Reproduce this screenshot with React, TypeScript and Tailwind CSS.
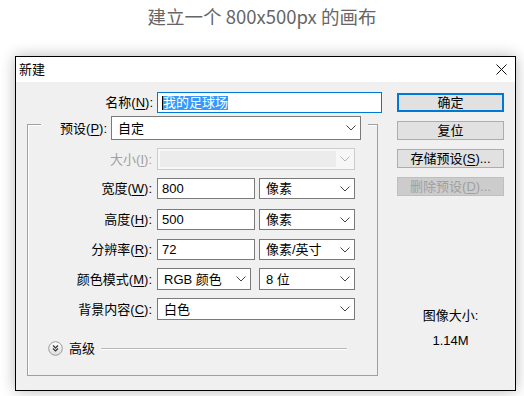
import React from 'react';

const Chevron = ({ color = '#444' }: { color?: string }) => (
  <svg width="10" height="6" viewBox="0 0 10 6">
    <path d="M0.5 0.5 L5 5 L9.5 0.5" fill="none" stroke={color} strokeWidth="1" />
  </svg>
);

const Select = ({ value, w, h = 'h-[22px]' }: { value: string; w: string; h?: string }) => (
  <div className={`${w} ${h} flex items-center justify-between border border-[#7a7a7a] bg-white pl-[6px] pr-[4px]`}>
    <span>{value}</span>
    <Chevron />
  </div>
);

const Label = ({ text, k, rest = '):', disabled = false }: { text: string; k: string; rest?: string; disabled?: boolean }) => (
  <div className={`w-[125px] text-right pr-[1px] ${disabled ? 'text-[#a0a0a0]' : 'text-black'}`}>
    {text}(<span className="underline underline-offset-2">{k}</span>{rest}
  </div>
);

const Button = ({ text, primary = false, disabled = false }: { text: React.ReactNode; primary?: boolean; disabled?: boolean }) => (
  <div
    className={`h-[19px] w-[107px] flex items-center justify-center ${
      primary
        ? 'border-2 border-[#0078d7] bg-[#e1e1e1]'
        : disabled
        ? 'border border-[#bfbfbf] bg-[#cccccc] text-[#a0a0a0]'
        : 'border border-[#adadad] bg-[#e1e1e1]'
    }`}
  >
    {text}
  </div>
);

export default function App() {
  return (
    <div className="w-[524px] h-[396px] bg-white overflow-hidden font-[family-name:'Liberation_Sans','Noto_Sans_CJK_SC',sans-serif] text-[13px] leading-none text-black">
      {/* Heading */}
      <div className="h-[56px] pt-[5px] text-center text-[18.5px] leading-[22px] text-[#666666] font-[family-name:'Noto_Sans_CJK_SC',sans-serif] font-normal">
        建立一个 800x500px 的画布
      </div>

      {/* Dialog */}
      <div className="ml-[15px] w-[501px] h-[335px] border border-black bg-[#f0f0f0] shadow-[0_0_14px_rgba(0,0,0,0.28)] flex flex-col">
        {/* Title bar */}
        <div className="h-[25px] bg-white flex items-center justify-between pl-[3px] pr-[8px]">
          <span className="text-[13px]">新建</span>
          <svg width="11" height="11" viewBox="0 0 11 11">
            <path d="M0.5 0.5 L10.5 10.5 M10.5 0.5 L0.5 10.5" stroke="#111" strokeWidth="1" />
          </svg>
        </div>

        {/* Body */}
        <div className="flex-1 flex">
          {/* Left column */}
          <div className="w-[366px] flex flex-col">
            <div className="mt-[10px] flex items-center">
              <div className="w-[138px] text-right pr-[1px]">
                名称(<span className="underline underline-offset-2">N</span>):
              </div>
              <div className="ml-[3px] w-[225px] h-[21px] border border-[#0078d7] bg-white flex items-center pl-[4px]">
                <span className="w-[1px] h-[14px] bg-black" />
                <span className="bg-[#3399ff] text-white leading-[14px]">我的足球场</span>
              </div>
            </div>

            {/* Group box */}
            <div className="mt-[11px] ml-[11px] w-[351px] h-[252px] border border-[#a0a0a0] shadow-[inset_1px_1px_0_#ffffff] flex flex-col">
              <div className="-mt-[9px] ml-[13px] w-[327px] bg-[#f0f0f0] flex items-center">
                <div className="w-[67px] text-right pr-[1px]">
                  预设(<span className="underline underline-offset-2">P</span>):
                </div>
                <div className="ml-[3px]">
                  <Select value="自定" w="w-[250px]" h="h-[24px]" />
                </div>
              </div>

              <div className="mt-[8px] flex items-center">
                <Label text="大小" k="I" disabled />
                <div className="ml-[4px] w-[198px] h-[22px] border border-[#cccccc] bg-[#f7f7f7] flex items-center justify-between p-[2px] pr-[4px]">
                  <div className="w-[176px] h-full bg-[#ececec]" />
                  <Chevron color="#b5b5b5" />
                </div>
              </div>

              <div className="mt-[8px] flex items-center">
                <Label text="宽度" k="W" />
                <div className="ml-[4px] w-[98px] h-[21px] border border-[#7a7a7a] bg-white flex items-center pl-[4px]">800</div>
                <div className="ml-[4px]">
                  <Select value="像素" w="w-[96px]" h="h-[21px]" />
                </div>
              </div>

              <div className="mt-[10px] flex items-center">
                <Label text="高度" k="H" />
                <div className="ml-[4px] w-[98px] h-[21px] border border-[#7a7a7a] bg-white flex items-center pl-[4px]">500</div>
                <div className="ml-[4px]">
                  <Select value="像素" w="w-[96px]" h="h-[21px]" />
                </div>
              </div>

              <div className="mt-[9px] flex items-center">
                <Label text="分辨率" k="R" />
                <div className="ml-[4px] w-[98px] h-[21px] border border-[#7a7a7a] bg-white flex items-center pl-[4px]">72</div>
                <div className="ml-[4px]">
                  <Select value="像素/英寸" w="w-[96px]" h="h-[21px]" />
                </div>
              </div>

              <div className="mt-[8px] flex items-center">
                <Label text="颜色模式" k="M" />
                <div className="ml-[4px]">
                  <Select value="RGB 颜色" w="w-[94px]" h="h-[22px]" />
                </div>
                <div className="ml-[8px]">
                  <Select value="8 位" w="w-[96px]" h="h-[22px]" />
                </div>
              </div>

              <div className="mt-[8px] flex items-center">
                <Label text="背景内容" k="C" />
                <div className="ml-[4px]">
                  <Select value="白色" w="w-[198px]" h="h-[22px]" />
                </div>
              </div>

              <div className="mt-[21px] ml-[20px] flex items-center">
                <svg width="15" height="15" viewBox="0 0 15 15">
                  <defs>
                    <linearGradient id="adv" x1="0" y1="0" x2="0" y2="1">
                      <stop offset="0" stopColor="#ffffff" />
                      <stop offset="1" stopColor="#dcdcdc" />
                    </linearGradient>
                  </defs>
                  <circle cx="7.5" cy="7.5" r="6.8" fill="url(#adv)" stroke="#9a9a9a" strokeWidth="1" />
                  <path d="M5 4.5 L7.5 7 L10 4.5 M5 7.5 L7.5 10 L10 7.5" fill="none" stroke="#333" strokeWidth="1.2" />
                </svg>
                <span className="ml-[6px]">高级</span>
                <div className="ml-[6px] w-[246px] h-[2px] border-t border-[#b8b8b8] border-b border-b-white" />
              </div>
            </div>
          </div>

          {/* Right column */}
          <div className="ml-[15px] w-[107px] flex flex-col">
            <div className="mt-[11px] flex flex-col gap-[9px]">
              <Button text="确定" primary />
              <Button text="复位" />
              <Button
                text={
                  <span>
                    存储预设(<span className="underline underline-offset-2">S</span>)...
                  </span>
                }
              />
              <Button
                text={
                  <span>
                    删除预设(<span className="underline underline-offset-2">D</span>)...
                  </span>
                }
                disabled
              />
            </div>
            <div className="mt-[113px] flex flex-col items-center">
              <span>图像大小:</span>
              <span className="mt-[12px]">1.14M</span>
            </div>
          </div>
        </div>
      </div>
    </div>
  );
}
